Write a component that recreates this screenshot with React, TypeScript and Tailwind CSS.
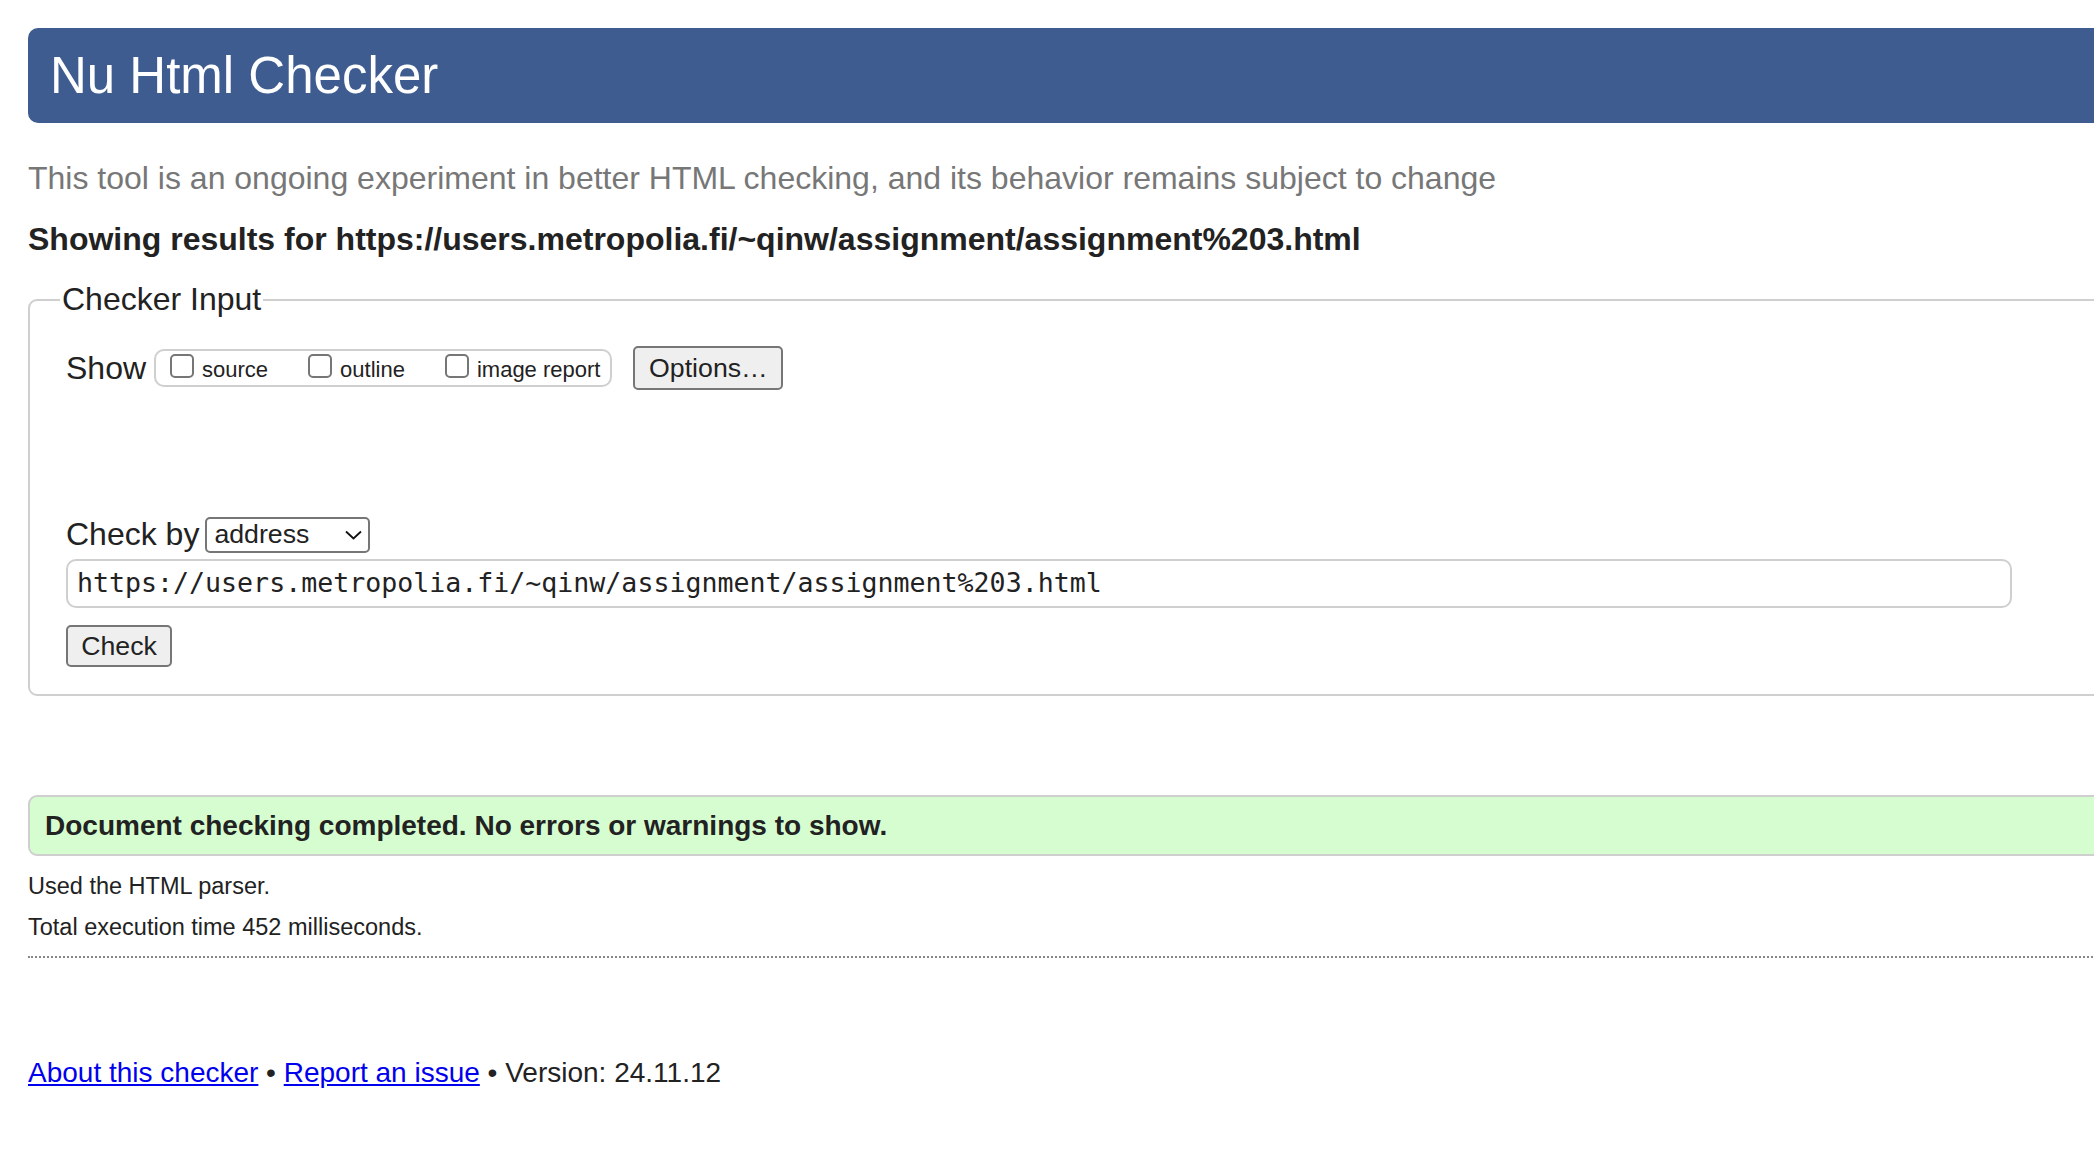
import { useState } from "react";

const url = "https://users.metropolia.fi/~qinw/assignment/assignment%203.html";

function Box({ label }: { label: string }) {
  const [on, setOn] = useState(false);
  return (
    <label className="flex cursor-pointer items-center gap-[8px]">
      <span
        onClick={() => setOn(!on)}
        className={`mb-[8px] h-[24px] w-[24px] rounded-[5px] border-2 border-[#767676] ${
          on ? "bg-[#3b7bd6]" : "bg-white"
        }`}
      />
      <span className="text-[22px] leading-[26px]">{label}</span>
    </label>
  );
}

export default function App() {
  return (
    <div className="h-screen w-screen overflow-hidden bg-white font-['Liberation_Sans',Arial,sans-serif] text-[#222]">
      <div className="w-[2140px] pl-[28px] pt-[28px]">
        <header className="flex h-[95px] items-center rounded-l-[10px] bg-[#3e5c90] pl-[22px]">
          <h1 className="text-[51px] leading-none text-white">Nu Html Checker</h1>
        </header>

        <p className="mt-[37px] text-[32px] leading-[37px] text-[#777]">
          This tool is an ongoing experiment in better HTML checking, and its behavior remains subject to change
        </p>
        <p className="mt-[24px] text-[32px] font-bold leading-[37px]">
          Showing results for {url}
        </p>

        <fieldset className="mt-[23px] rounded-[9px] border-2 border-[#cfcfcf] pb-[27px] pl-[36px] pt-[28px]">
          <legend className="-ml-[6px] px-[2px] text-[32px] leading-[37px]">Checker Input</legend>

          <div className="flex h-[44px] items-center">
            <span className="text-[32px] leading-[37px]">Show</span>
            <div className="ml-[8px] flex h-[38px] items-center gap-[40px] rounded-[10px] border-2 border-[#cfcfcf] pl-[14px] pr-[10px] pt-[4px]">
              <Box label="source" />
              <Box label="outline" />
              <Box label="image report" />
            </div>
            <button className="ml-[21px] flex h-[44px] w-[150px] items-center justify-center rounded-[5px] border-2 border-[#767676] bg-[#efefef] text-[26.7px]">
              Options…
            </button>
          </div>

          <div className="mt-[126px] flex h-[37px] items-center">
            <span className="text-[32px] leading-[37px]">Check by</span>
            <div className="ml-[6px] flex h-[36px] w-[165px] items-center justify-between rounded-[5px] border-2 border-[#767676] bg-white pl-[7px] pr-[6px]">
              <span className="text-[26.7px] leading-none">address</span>
              <svg width="17" height="10" viewBox="0 0 17 10" fill="none" stroke="#111" strokeWidth="1.8">
                <polyline points="1,1.5 8.5,8.5 16,1.5" />
              </svg>
            </div>
          </div>

          <div className="mt-[6px] flex h-[49px] w-[1946px] items-center rounded-[10px] border-2 border-[#cfcfcf] pl-[9px]">
            <span className="font-['DejaVu_Sans_Mono',monospace] text-[26.6px] leading-none">{url}</span>
          </div>

          <button className="mt-[17px] flex h-[42px] w-[106px] items-center justify-center rounded-[5px] border-2 border-[#767676] bg-[#efefef] text-[26.7px]">
            Check
          </button>
        </fieldset>

        <div className="mt-[99px] flex h-[61px] items-center rounded-l-[9px] border-2 border-[#cfcfcf] bg-[#d6fdd0] pl-[15px]">
          <span className="text-[28px] font-bold">Document checking completed. No errors or warnings to show.</span>
        </div>

        <p className="mt-[16px] text-[23.5px] leading-[28px]">Used the HTML parser.</p>
        <p className="mt-[13px] text-[23.5px] leading-[28px]">Total execution time 452 milliseconds.</p>

        <div className="mt-[15px] border-t-2 border-dotted border-[#888]" />

        <p className="mt-[99px] text-[28px] leading-[32px]">
          <a href="#" className="text-[#0000ee] underline">About this checker</a>
          {" • "}
          <a href="#" className="text-[#0000ee] underline">Report an issue</a>
          {" • Version: 24.11.12"}
        </p>
      </div>
    </div>
  );
}
